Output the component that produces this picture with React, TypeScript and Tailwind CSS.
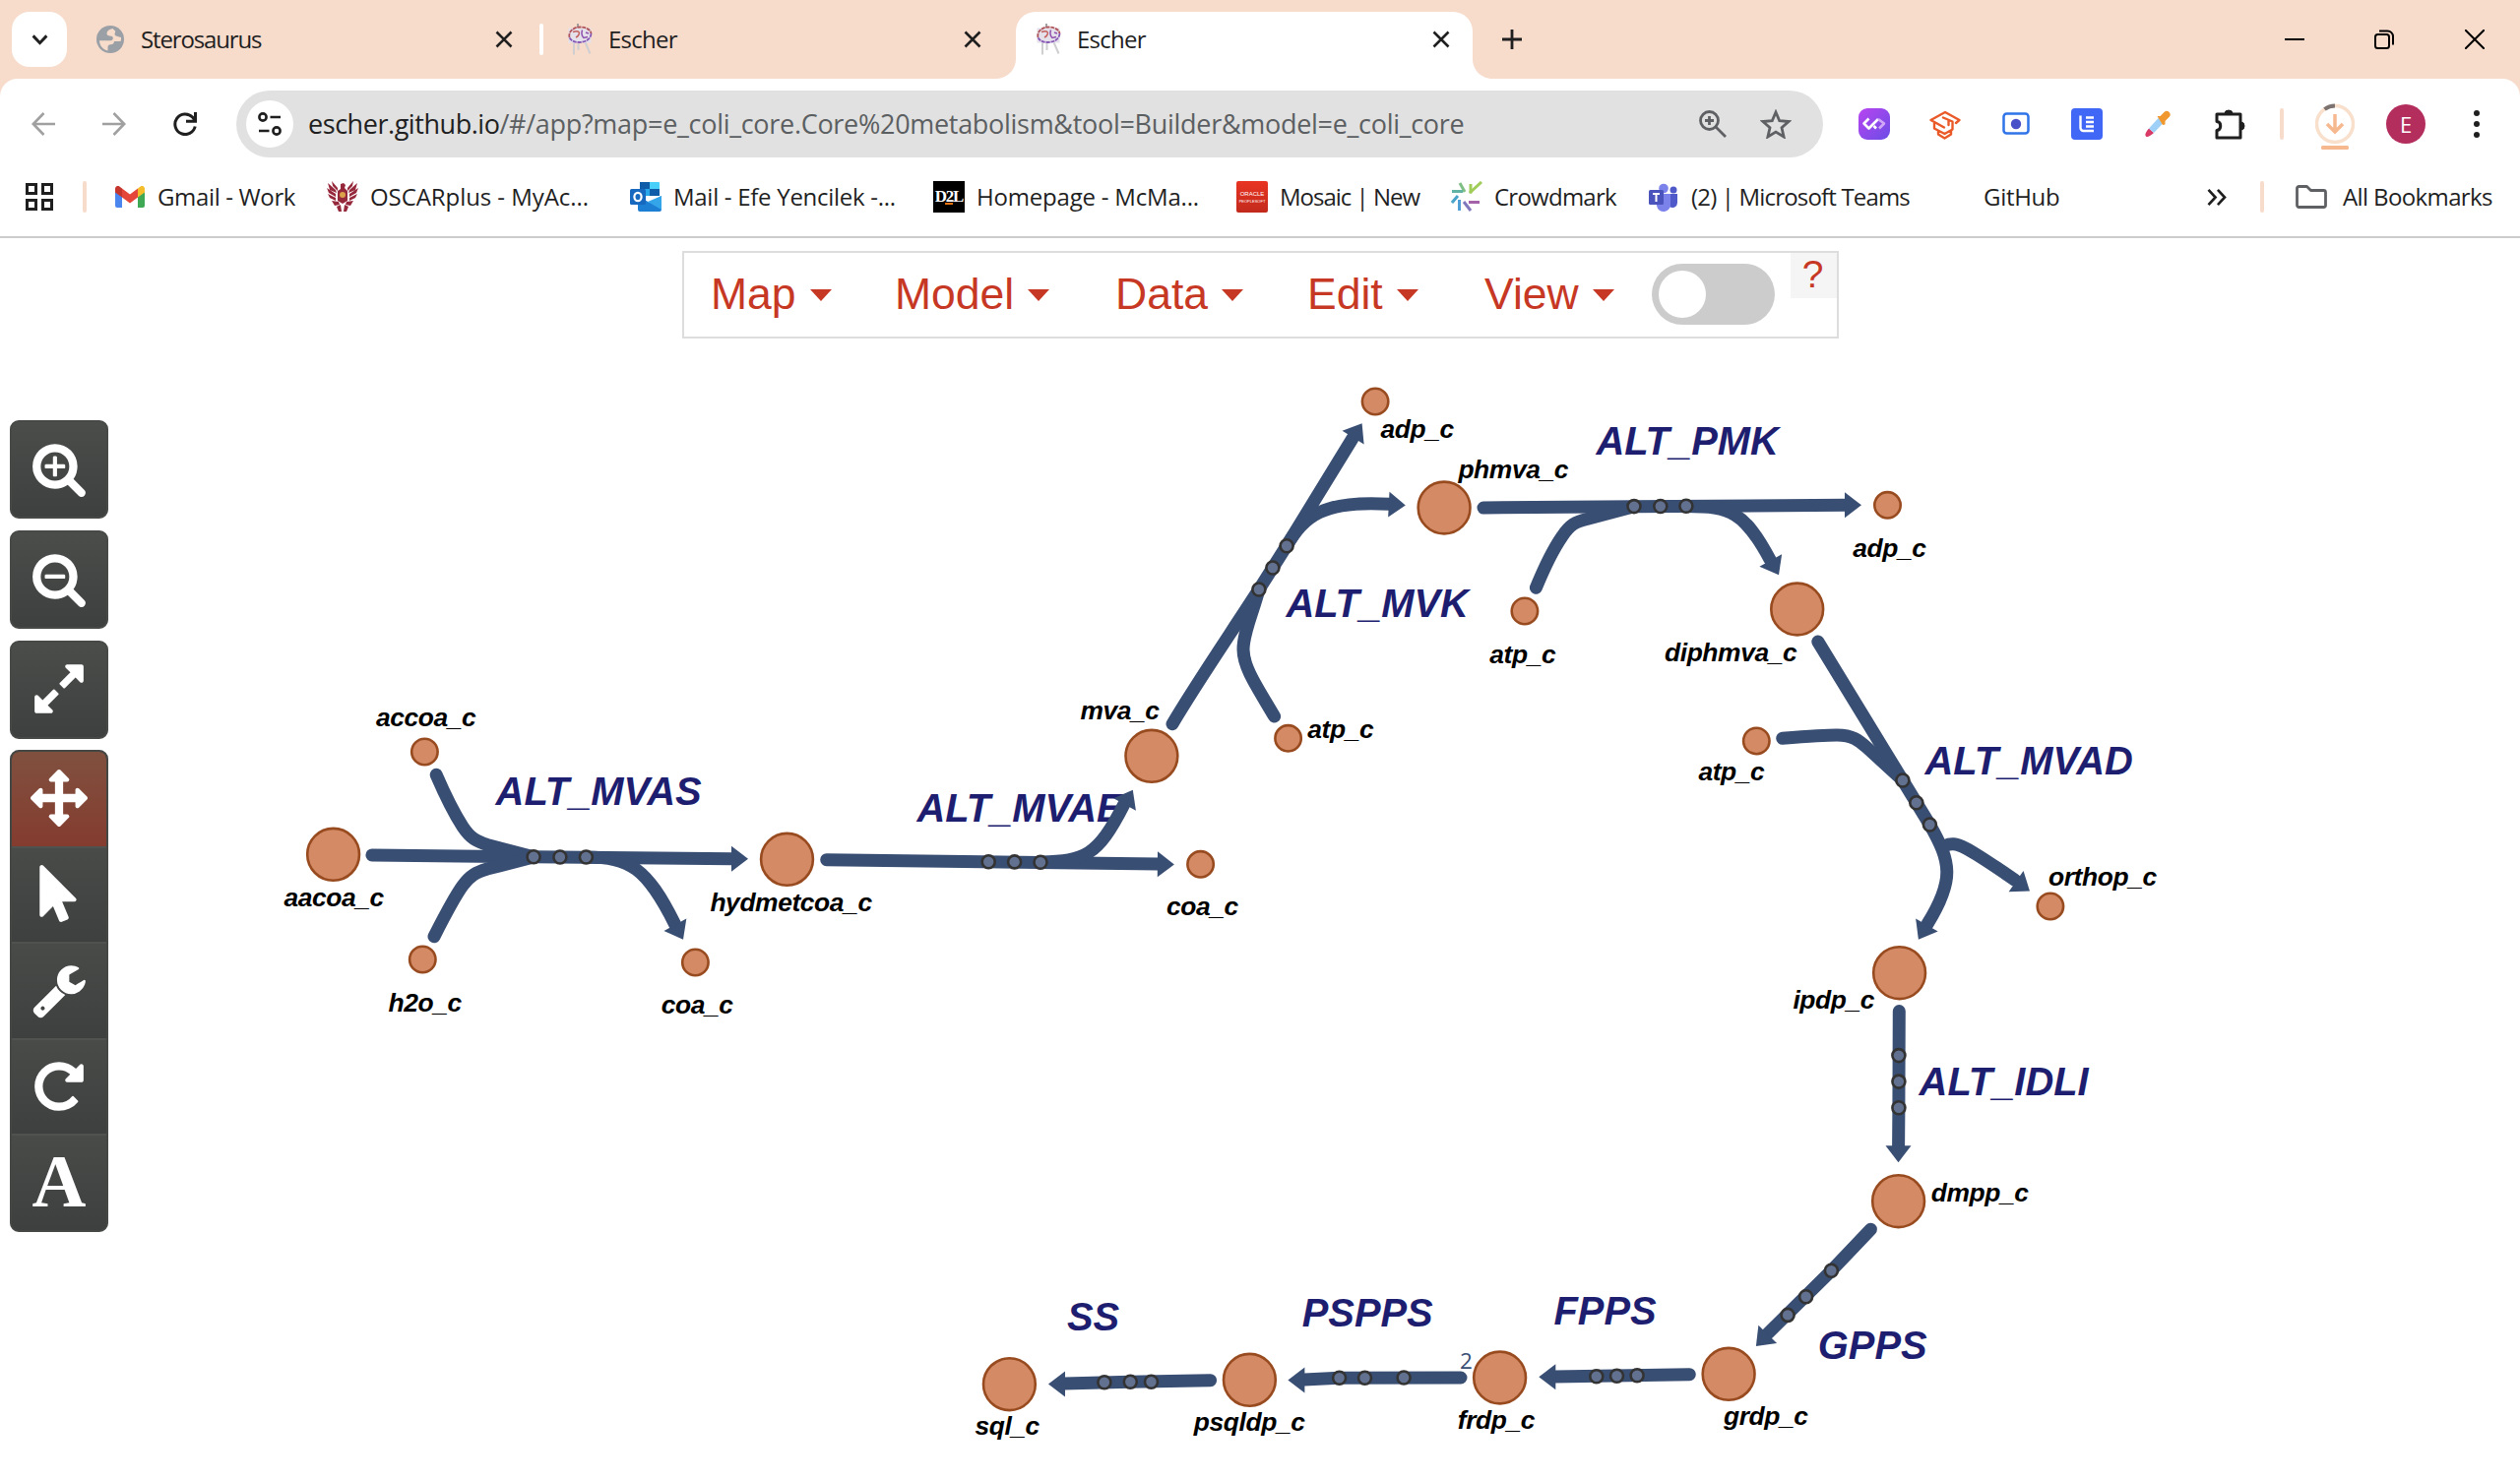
import React from "react";

const INK = "#394e73";

/* ---------- pathway data ---------- */

const bigNodes: [number, number][] = [
  [338.6, 868.3], [799.5, 873.3], [1169.9, 768.3], [1467.1, 516], [1825.7, 619],
  [1929.6, 988.7], [1928.6, 1220.7], [1756.1, 1396.3], [1523.6, 1400], [1269.4, 1402.3], [1025.4, 1406.7],
];

const smallNodes: [number, number][] = [
  [431.4, 764], [429.3, 975], [706.4, 978], [1219.6, 878.3], [1397.1, 408],
  [1548.9, 621], [1308.6, 750.3], [1917.5, 513.3], [1784.3, 753], [2082.9, 921],
];

const markers: [number, number][] = [
  [542.1, 870.8], [568.9, 871], [595.4, 871],
  [1004.2, 875.8], [1030.6, 875.9], [1057, 876.2],
  [1278.9, 599], [1292.9, 577], [1307.1, 554.7],
  [1660, 514.6], [1686.8, 514.5], [1712.9, 514.3],
  [1932.9, 793], [1946.8, 815.7], [1960.4, 838],
  [1928.9, 1072.6], [1928.9, 1099.1], [1928.9, 1125.7],
  [1860.4, 1291.3], [1834.6, 1317.8], [1816.1, 1336.4],
  [1621.8, 1398.7], [1642.5, 1398.3], [1663.1, 1397.7],
  [1360.6, 1400.3], [1386.5, 1400.3], [1426.1, 1400],
  [1121.9, 1404.7], [1148.3, 1404.3], [1169.5, 1404.3],
];

const edges: string[] = [
  "M377.9 869 L542 870.8 L744 872.7",
  "M443.2 787.3 C453 810 463 829 470 840 C478 852 484 855 495 858.5 L542 870.8",
  "M441 951.7 C451 932 462 911 470 900 C478 889 484 886.5 495 883 L542 871",
  "M595 871 C640 871 657 882 685.5 939",
  "M839.7 873.7 L1177 878",
  "M1057 876 C1102 875 1115 870 1141.5 818",
  "M1191 735.7 C1215 695 1250 644 1279 599 L1307 554.7 L1374 445.5",
  "M1307 554.7 C1325 525 1343 508 1411.5 512.3",
  "M1294.6 728 C1277 698 1263 678 1263 660 C1263 643 1272 625 1279 599",
  "M1507 516 L1660 514.7 L1875 513.3",
  "M1560.4 597.3 C1570 574 1580 555 1587 545 C1595 533 1601 530 1612 527.5 L1660 514.7",
  "M1713 514.5 C1758 514.5 1772 520 1798 568.5",
  "M1846.8 652 L1932.9 793 L1960.4 838",
  "M1810.7 750.3 C1840 748 1855 747 1866 747 C1882 747 1888 752 1898 761 L1932.9 793",
  "M1960.4 838 C1982 876 1986 894 1958 939",
  "M1976 859.5 C1987 854 1997 860 2047 894.3",
  "M1929.3 1027.5 L1928.9 1126 L1928.6 1165",
  "M1900.4 1249.3 L1860.4 1291.3 L1796 1355",
  "M1716.3 1396.7 L1579 1399",
  "M1484 1400 L1360 1400.3 L1325 1402",
  "M1229.6 1402.7 L1148 1404.3 L1081 1406",
];

/* arrow heads: tip x, tip y, heading in degrees */
const heads: [number, number, number][] = [
  [760, 872.8, 0], [694, 954.7, 61.5], [1192.9, 878.4, 0.5], [1150.8, 802.7, -61],
  [1383.6, 430.3, -58], [1427.8, 513.5, 3], [1891, 513.3, 0], [1807, 584.3, 61],
  [1948.9, 954.7, 120], [2062, 905.4, 35], [1928.5, 1181.2, 90], [1783.9, 1368.1, 134],
  [1563.3, 1399.3, 180], [1308.4, 1402.4, 180], [1065, 1406.4, 180],
];

const reactions: [string, number, number][] = [
  ["ALT_MVAS", 503.6, 817.7], ["ALT_MVAE", 931.5, 835], ["ALT_MVK", 1306.4, 627],
  ["ALT_PMK", 1621.4, 461.7], ["ALT_MVAD", 1955.5, 787], ["ALT_IDLI", 1949.6, 1113],
  ["GPPS", 1846.8, 1381.3], ["FPPS", 1578.5, 1345.7], ["PSPPS", 1322.7, 1347.7], ["SS", 1084, 1351.5],
];

const metabolites: [string, number, number][] = [
  ["accoa_c", 382, 737.7], ["aacoa_c", 288.4, 920.7], ["h2o_c", 394.6, 1028], ["coa_c", 671.8, 1030.3],
  ["hydmetcoa_c", 721.4, 925.7], ["mva_c", 1097.4, 731], ["coa_c", 1185, 930.3], ["adp_c", 1402.5, 444.7],
  ["phmva_c", 1481.4, 486], ["atp_c", 1513.3, 673.7], ["atp_c", 1328.3, 749.7], ["adp_c", 1882.3, 565.7],
  ["diphmva_c", 1691, 671.7], ["atp_c", 1725.4, 792.7], ["orthop_c", 2081, 899.7], ["ipdp_c", 1821.4, 1024.7],
  ["dmpp_c", 1961.8, 1220.7], ["grdp_c", 1751, 1447.7], ["frdp_c", 1480.8, 1452], ["psqldp_c", 1212.8, 1454.3],
  ["sql_c", 990.4, 1458.3],
];

/* The canvas begins 242px below the top of the window. */
function Pathway() {
  return (
    <svg viewBox="0 242 2560 1262" className="absolute inset-0 h-[1262px] w-[2560px]">
      <g fontFamily='"Liberation Sans", Arial, sans-serif' fontWeight="bold" fontStyle="italic">
        {reactions.map(([t, x, y]) => (
          <text key={t} x={x} y={y} fontSize="39.9" fill="#1e1e70">{t}</text>
        ))}
      </g>
      <g fill="none" stroke={INK} strokeWidth="13" strokeLinecap="round" strokeLinejoin="round">
        {edges.map((d) => <path key={d} d={d} />)}
      </g>
      <g fill={INK}>
        {heads.map(([x, y, a], i) => (
          <path key={i} d="M0 0 L-17 -13 V13 Z" transform={`translate(${x} ${y}) rotate(${a})`} />
        ))}
      </g>
      <g fill="#62718f" stroke="#333" strokeWidth="2.6">
        {markers.map(([x, y], i) => <circle key={i} cx={x} cy={y} r="6.5" />)}
      </g>
      <g fill="#d38a65" stroke="#994b20" strokeWidth="2.6">
        {bigNodes.map(([x, y], i) => <circle key={i} cx={x} cy={y} r="26.4" />)}
        {smallNodes.map(([x, y], i) => <circle key={i} cx={x} cy={y} r="13.2" />)}
      </g>
      <g fontFamily='"Liberation Sans", Arial, sans-serif' fontWeight="bold" fontStyle="italic" fill="#000">
        {metabolites.map(([t, x, y], i) => (
          <text key={i} x={x} y={y} fontSize="26.4" letterSpacing="-0.4">{t}</text>
        ))}
      </g>
      <text x="1483" y="1390.5" fontSize="22.5" fill={INK} fontFamily='"Open Sans", sans-serif'>2</text>
    </svg>
  );
}

/* ---------- glyphs ---------- */

const glyph = {
  plus: "M1088 800v64q0 13-9.500 22.500t-22.500 9.500h-224v224q0 13-9.500 22.500t-22.500 9.500h-64q-13 0-22.500-9.500t-9.500-22.500v-224h-224q-13 0-22.500-9.500t-9.500-22.500v-64q0-13 9.500-22.500t22.500-9.500h224v-224q0-13 9.500-22.500t22.500-9.500h64q13 0 22.500 9.500t9.500 22.500v224h224q13 0 22.500 9.500t9.500 22.500z",
  minus: "M1088 800v64q0 13-9.500 22.500t-22.500 9.500h-576q-13 0-22.500-9.500t-9.500-22.500v-64q0-13 9.500-22.500t22.500-9.500h576q13 0 22.500 9.500t9.500 22.500z",
  lens: "M1216 832q0-185-131.500-316.500t-316.500-131.500-316.500 131.500-131.500 316.500 131.500 316.500 316.500 131.500 316.500-131.500 131.500-316.500zm512 832q0 53-37.500 90.500t-90.500 37.500q-54 0-90-38l-343-342q-179 124-399 124-143 0-273.500-55.500t-225-150-150-225-55.500-273.500 55.500-273.500 150-225 225-150 273.500-55.500 273.500 55.500 225 150 150 225 55.500 273.500q0 220-124 399l343 343q37 37 37 90z",
  expand: "M883 1056q0 13-10 23l-332 332 144 144q19 19 19 45t-19 45-45 19h-448q-26 0-45-19t-19-45v-448q0-26 19-45t45-19 45 19l144 144 332-332q10-10 23-10t23 10l114 114q10 10 10 23zm781-864v448q0 26-19 45t-45 19-45-19l-144-144-332 332q-10 10-23 10t-23-10l-114-114q-10-10-10-23t10-23l332-332-144-144q-19-19-19-45t19-45 45-19h448q26 0 45 19t19 45z",
  move: "M1792 896q0 26-19 45l-256 256q-19 19-45 19t-45-19-19-45v-128h-384v384h128q26 0 45 19t19 45-19 45l-256 256q-19 19-45 19t-45-19l-256-256q-19-19-19-45t19-45 45-19h128v-384h-384v128q0 26-19 45t-45 19-45-19l-256-256q-19-19-19-45t19-45l256-256q19-19 45-19t45 19 19 45v128h384v-384h-128q-26 0-45-19t-19-45 19-45l256-256q19-19 45-19t45 19l256 256q19 19 19 45t-19 45-45 19h-128v384h384v-128q0-26 19-45t45-19 45 19l256 256q19 19 19 45z",
  pointer: "M1389 1043q31 30 14 69-17 40-59 40h-382l201 476q10 25 0 49t-34 35l-177 75q-25 10-49 0t-35-34l-191-452-312 312q-19 19-45 19-12 0-24-5-40-17-40-59v-1504q0-42 40-59 12-5 24-5 27 0 45 19z",
  wrench: "M448 1472q0-26-19-45t-45-19-45 19-19 45 19 45 45 19 45-19 19-45zm644-420l-682 682q-37 37-90 37-52 0-91-37l-106-108q-38-36-38-90 0-53 38-91l681-681q39 98 114.500 173.500t173.500 114.500zm634-435q0 39-23 106-47 134-164.500 217.500t-258.500 83.500q-185 0-316.500-131.500t-131.500-316.500 131.500-316.500 316.500-131.500q58 0 121.500 16.500t107.500 46.500q16 11 16 28t-16 28l-293 169v224l193 107q5-3 79-48.500t135.500-81 70.500-35.500q15 0 23.500 10t8.500 25z",
  rotate: "M1664 256v448q0 26-19 45t-45 19h-448q-42 0-59-40-17-39 14-69l138-138q-148-137-349-137-104 0-198.500 40.500t-163.500 109.500-109.500 163.500-40.500 198.500 40.500 198.500 109.500 163.500 163.500 109.500 198.500 40.500q119 0 225-52t179-147q7-10 23-12 15 0 25 9l137 138q9 8 9.500 20.500t-7.500 22.500q-109 132-264 204.500t-327 72.500q-156 0-298-61t-245-164-164-245-61-298 61-298 164-245 245-164 298-61q147 0 284.500 55.500t244.500 156.500l130-129q29-31 70-14 39 17 39 59z",
};

function Glyph({ d, className = "" }: { d: string; className?: string }) {
  return (
    <svg viewBox="0 0 1792 1792" className={`size-[58px] ${className}`} fill="#fff">
      <path d={d} fillRule="evenodd" />
    </svg>
  );
}

function ToolButton({ children }: { children: React.ReactNode }) {
  return (
    <div className="flex h-[100px] w-[100px] items-center justify-center rounded-[9px] border-2 border-[#474947] bg-linear-to-b from-[#4b4d4b] to-[#3e403f]">
      {children}
    </div>
  );
}

function GroupCell({ active = false, children }: { active?: boolean; children: React.ReactNode }) {
  return (
    <div
      className={
        active
          ? "flex flex-1 items-center justify-center rounded-t-[7px] bg-linear-to-b from-[#80503f] to-[#843c2f]"
          : "flex flex-1 items-center justify-center border-t-2 border-[#505250] bg-linear-to-b from-[#494b49] to-[#3e403f]"
      }
    >
      {children}
    </div>
  );
}

function Sidebar() {
  return (
    <div className="absolute left-[10px] top-[185px] flex w-[100px] flex-col">
      <div className="flex flex-col gap-3">
        <ToolButton><Glyph d={glyph.lens + glyph.plus} className="-mt-[3px]" /></ToolButton>
        <ToolButton><Glyph d={glyph.lens + glyph.minus} className="-mt-[3px]" /></ToolButton>
        <ToolButton><Glyph d={glyph.expand} className="-mt-[2px]" /></ToolButton>
      </div>
      <div className="mt-[11px] flex h-[490px] flex-col overflow-hidden rounded-[9px] border-2 border-[#454745] bg-[#3e403f]">
        <GroupCell active><Glyph d={glyph.move} className="-mt-[2px]" /></GroupCell>
        <GroupCell><Glyph d={glyph.pointer} className="ml-[2px] -mt-[2px]" /></GroupCell>
        <GroupCell><Glyph d={glyph.wrench} className="-mt-[2px]" /></GroupCell>
        <GroupCell><Glyph d={glyph.rotate} className="-mt-[2px]" /></GroupCell>
        <GroupCell>
          <span className="-mt-[4px] font-['Liberation_Serif',serif] text-[76px] font-bold leading-[76px] text-white">A</span>
        </GroupCell>
      </div>
    </div>
  );
}

/* ---------- app menu ---------- */

function MenuItem({ label, className }: { label: string; className: string }) {
  return (
    <div className={`flex items-center ${className}`}>
      <span className="whitespace-nowrap text-[44.500px] leading-[50px]">{label}</span>
      <svg viewBox="0 0 22 12" className="ml-[14px] mt-[2px] h-[12px] w-[22px]" fill="#c73824">
        <path d="M0 0H22L11 12Z" />
      </svg>
    </div>
  );
}

function AppMenu() {
  return (
    <div className="absolute left-[693px] top-[13px] flex h-[89px] w-[1175px] border-2 border-[#ddd] bg-white pl-[27px] font-['Liberation_Sans',Arial,sans-serif] text-[#c73824]">
      <div className="flex items-center pb-[1px]">
        <MenuItem label="Map" className="w-[187px]" />
        <MenuItem label="Model" className="w-[224px]" />
        <MenuItem label="Data" className="w-[195px]" />
        <MenuItem label="Edit" className="w-[180px]" />
        <MenuItem label="View" className="w-[170px]" />
        <div className="flex h-[62px] w-[125px] items-center rounded-full bg-[#ccc] pl-[7px]">
          <div className="size-[48px] rounded-full bg-white" />
        </div>
      </div>
      <div className="ml-auto flex h-[46px] w-[47px] items-center justify-center bg-[#f5f5f5] pb-[4px] pr-[2px] text-[39px] leading-none">?</div>
    </div>
  );
}

/* ---------- browser chrome ---------- */

function Globe() {
  return (
    <svg viewBox="0 0 28 28" className="size-7 flex-none">
      <circle cx="14" cy="14" r="14" fill="#9aa0a6" />
      <path d="M16.500 3c-3.500.8-6 2.500-6 5 0 1.500 1.200 2.500 3 2.500 2.200 0 3.300.8 3.300 2.400 0 1.500-1.300 2.300-3.800 2.300H3c.3 5.500 3.800 9.300 8.500 10.300v-3.200c0-2 1-3 2.700-3 2.400 0 3.800-1.300 3.800-3.300h6.600c.4-1.300.6-2.500.4-4l-3.500-1c-2.300-.4-3.300-1.400-2.800-3.200l.6-2z" fill="#f7dbcb" />
    </svg>
  );
}

function EscherIcon() {
  return (
    <svg viewBox="0 0 26 32" className="h-8 w-[26px] flex-none" fill="none">
      <path d="M7 19v12.500M11.500 19v8M18.500 19l5 11.500" stroke="#cfcfd2" strokeWidth="2" />
      <path d="M11 0v4" stroke="#8b8b8e" strokeWidth="1.600" />
      <rect x="1.500" y="4.500" width="23" height="15" fill="#e4e1ea" />
      <path d="M2.500 14C1 8 7 3.500 13 3.500S24 6 24.500 10" stroke="#b0545c" strokeWidth="1.800" strokeDasharray="4 .8" />
      <path d="M24.500 10c0 5-5 9-12 9-5 0-9-2-10-5" stroke="#8657b5" strokeWidth="1.800" strokeDasharray="4 .8" />
      <path d="M6 8.500c3-1 5-1 6 0s0 4-3 5.500" stroke="#c4605c" strokeWidth="1.500" />
      <path d="M15.500 6.500c-1 3-.500 6 1.500 8l4-1M19 9l3 1" stroke="#8f4fae" strokeWidth="1.500" />
    </svg>
  );
}

function CloseX() {
  return (
    <svg viewBox="0 0 18 18" className="size-[18px] flex-none" stroke="#1f1f1f" strokeWidth="2.600">
      <path d="M1.500 1.500l15 15M16.500 1.500l-15 15" />
    </svg>
  );
}

function TabStrip() {
  return (
    <div className="flex h-20 items-center bg-[#f7dbcb] pl-3">
      <div className="flex size-14 items-center justify-center rounded-[18px] bg-white">
        <svg viewBox="0 0 18 12" className="h-[11px] w-[17px]" fill="none" stroke="#1f1f1f" strokeWidth="3.200"><path d="M1.500 1.500L9 9.500l7.500-8" /></svg>
      </div>
      <div className="flex h-20 w-[480px] items-center pl-[30px] pr-[27px]">
        <Globe />
        <span className="ml-[17px] flex-1 text-[24px] tracking-[-1.150px]">Sterosaurus</span>
        <CloseX />
      </div>
      <div className="h-8 w-1 rounded-full bg-white" />
      <div className="flex h-20 w-[480px] items-center pl-6 pr-[35px]">
        <EscherIcon />
        <span className="ml-4 flex-1 text-[24px] tracking-[-0.750px]">Escher</span>
        <CloseX />
      </div>
      <div className="relative flex h-20 w-[464px] pt-3">
        <svg viewBox="0 0 20 20" className="absolute -left-5 bottom-0 size-5" fill="#fff"><path d="M20 0v20H0C11 20 20 11 20 0Z" /></svg>
        <svg viewBox="0 0 20 20" className="absolute -right-5 bottom-0 size-5" fill="#fff"><path d="M0 0v20h20C9 20 0 11 0 0Z" /></svg>
        <div className="flex h-[68px] w-full items-center rounded-t-[20px] bg-white pb-3 pl-5 pr-[23px]">
          <EscherIcon />
          <span className="ml-4 flex-1 text-[24px] tracking-[-0.750px]">Escher</span>
          <CloseX />
        </div>
      </div>
      <svg viewBox="0 0 20 20" className="ml-[30px] size-5" stroke="#1f1f1f" strokeWidth="2.800"><path d="M10 0v20M0 10h20" /></svg>
      <div className="ml-auto flex items-center pr-9">
        <svg viewBox="0 0 20 20" className="size-5" stroke="#000" strokeWidth="2"><path d="M0 10h20" /></svg>
        <svg viewBox="0 0 20 20" className="ml-[71px] size-5" stroke="#000" strokeWidth="2" fill="none"><rect x="1" y="5" width="14" height="14" rx="2.500" /><path d="M5 1.500h8.500A5.500 5.500 0 0 1 19 7v8.500" /></svg>
        <svg viewBox="0 0 20 20" className="ml-[72px] size-5" stroke="#000" strokeWidth="2"><path d="M0 0l20 20M20 0L0 20" /></svg>
      </div>
    </div>
  );
}

function Toolbar() {
  return (
    <div className="flex h-[92px] items-center bg-[#f7dbcb]">
      <div className="flex h-full w-full items-center rounded-t-[18px] bg-white pl-8">
        <svg viewBox="0 0 24 24" className="size-6" fill="none" stroke="#a0a0a0" strokeWidth="2.600"><path d="M12.500 1L1.800 12l10.700 11M2 12h22" /></svg>
        <svg viewBox="0 0 24 24" className="ml-12 size-6" fill="none" stroke="#a0a0a0" strokeWidth="2.600"><path d="M11.500 1l10.700 11-10.700 11M22 12H0" /></svg>
        <svg viewBox="0 0 24 24" className="ml-12 size-6" fill="none" stroke="#1f1f1f" strokeWidth="3"><path d="M22.200 14.500A10.300 10.300 0 1 1 19.500 5L22 8M22.500 0v9.300H13" /></svg>
        <div className="ml-10 flex h-[68px] w-[1612px] items-center rounded-full bg-[#e1e1e1] pl-[10px] pr-8">
          <div className="flex size-12 items-center justify-center rounded-full bg-white">
            <svg viewBox="0 0 24 24" className="size-6" fill="none" stroke="#1f1f1f" strokeWidth="2.600"><circle cx="5" cy="5" r="3.600" /><circle cx="19" cy="19" r="3.600" /><path d="M12.500 5H23M1 19h10.500" /></svg>
          </div>
          <span className="ml-[15px] whitespace-nowrap text-[27px] tracking-[-0.295px] text-[#5c5f62]">
            <span className="tracking-[-0.450px] text-[#1f1f1f]">escher.github.io</span>/#/app?map=e_coli_core.Core%20metabolism&amp;tool=Builder&amp;model=e_coli_core
          </span>
          <svg viewBox="0 0 28 28" className="ml-auto size-7" fill="none" stroke="#5f6063" strokeWidth="2.800"><circle cx="10.500" cy="10.500" r="9" /><path d="M17 17l10 10M10.500 6v9M6 10.500h9" /></svg>
          <svg viewBox="0 0 32 30" className="ml-[34px] h-[30px] w-8" fill="none" stroke="#5f6063" strokeWidth="2.800"><path d="M16 3l3.700 8.700 9.300.8-7 6.200 2.100 9.300-8.100-4.900L7.900 28 10 18.700l-7-6.200 9.300-.8z" /></svg>
        </div>
        <svg viewBox="0 0 32 32" className="ml-9 size-8">
          <defs><linearGradient id="pg" x1="0" y1="0" x2="1" y2="1"><stop offset="0" stopColor="#b845f0" /><stop offset="1" stopColor="#6b4de6" /></linearGradient></defs>
          <rect width="32" height="32" rx="9" fill="url(#pg)" />
          <path d="M10.500 10.500L5.500 15.500l5 5 9.500-9.500" fill="none" stroke="#fff" strokeWidth="2.600" strokeLinejoin="round" />
          <path d="M15.500 18l2.500 2.500" fill="none" stroke="#fff" strokeWidth="2.600" />
          <path d="M20 11l6 4.500-5 5" fill="none" stroke="#d0a8f7" strokeWidth="2.600" strokeLinejoin="round" />
        </svg>
        <svg viewBox="0 0 32 32" className="ml-10 size-8" fill="none" stroke="#ea5a28" strokeWidth="2.400" strokeLinejoin="round" strokeLinecap="round">
          <path d="M15 19.500L1.500 12 16 4l14.500 8-3.500 3M5 15v5.500l10.500 5.500 8-4.500V13.500L14 9.500M9 23.500v3l6.500 4 6.500-4v-3.500M19.500 12v5" />
        </svg>
        <svg viewBox="0 0 28 24" className="ml-[42px] h-6 w-7"><rect x="1.500" y="1.500" width="25" height="20" rx="3" fill="#fff" stroke="#2f74e8" strokeWidth="2.500" /><circle cx="14" cy="12" r="5.200" fill="#4951c9" /></svg>
        <svg viewBox="0 0 32 32" className="ml-[42px] size-8"><rect width="32" height="32" rx="4" fill="#4067f5" /><path d="M9.500 7.500V20a3 3 0 0 0 3 3H23M15 9.500h8M15 14h8M15 18.500h8" stroke="#fff" strokeWidth="2.400" fill="none" /></svg>
        <svg viewBox="0 0 28 28" className="ml-[42px] size-7"><path d="M2 26.500c-1.500-1.500 0-4.500 3-8l5 4.500c-3 3-7 5-8 3.500z" fill="#d93a66" /><path d="M5 18.500L15.500 7l5 5L10 23z" fill="#9fd0f7" /><path d="M13.500 6h3L21 1.500c3-2.500 7.500 2 5 5L21.500 11v3.500L19 15z" fill="#f0982e" /></svg>
        <svg viewBox="0 0 34 34" className="ml-[43px] size-[34px]" fill="none" stroke="#1f1f1f" strokeWidth="3" strokeLinejoin="round">
          <path d="M3 7h24v24H3v-7.500c5-.5 5-8.500 0-9z" />
          <path d="M11 6.500a4 3.500 0 0 1 8 0zM27.500 15a3.500 4 0 0 1 0 8z" fill="#1f1f1f" strokeWidth="1" />
        </svg>
        <div className="ml-[33px] h-8 w-1 rounded-full bg-[#f7dbcb]" />
        <svg viewBox="0 0 40 50" className="ml-8 mt-[6px] h-[50px] w-10" fill="none">
          <circle cx="20" cy="22" r="18.500" stroke="#f9e0cd" strokeWidth="3.500" />
          <path d="M9.500 7A18.500 18.500 0 0 1 20 3.500" stroke="#7c7370" strokeWidth="4" />
          <path d="M20 12v17M12 22l8 8 8-8" stroke="#f6b88f" strokeWidth="3.500" />
          <rect x="6" y="44" width="28" height="4" rx="1.500" fill="#f6b88f" />
        </svg>
        <div className="ml-8 flex size-10 items-center justify-center rounded-full bg-[#b32d5d] text-[22px] text-white">E</div>
        <svg viewBox="0 0 6 28" className="ml-[49px] h-7 w-[6px]" fill="#1f1f1f"><circle cx="3" cy="3" r="3" /><circle cx="3" cy="14" r="3" /><circle cx="3" cy="25" r="3" /></svg>
      </div>
    </div>
  );
}

function Bookmark({ icon, label, box, track }: { icon?: React.ReactNode; label: string; box: string; track: string }) {
  return (
    <div className={`flex flex-none items-center ${box}`}>
      {icon && <div className="mr-3 flex size-8 flex-none items-center justify-center">{icon}</div>}
      <span className={`whitespace-nowrap text-[24px] ${track}`}>{label}</span>
    </div>
  );
}

const GmailIcon = (
  <svg viewBox="0 0 30 22" className="h-[22px] w-[30px]">
    <path d="M0 3v17a2 2 0 0 0 2 2h5V8.500z" fill="#4a86ee" />
    <path d="M30 3v17a2 2 0 0 1-2 2h-5V8.500z" fill="#3fa855" />
    <path d="M23 2.500L26 .3c2-1 4 .4 4 2.700v3.500l-7 5z" fill="#f6bd2b" />
    <path d="M7 2.500L4 .3C2 -.7 0 .7 0 3v3.500l7 5z" fill="#c5352b" />
    <path d="M7 2.500l8 6 8-6v9l-8 6-8-6z" fill="#e4473a" />
  </svg>
);

const CrestIcon = (
  <svg viewBox="0 0 32 32" className="size-8" fill="#96283c">
    <path d="M1 2l8 7 1 3-7-3zM0 7l9 6v3l-7-4zM1 13l8 4v3l-6-3zM31 2l-8 7-1 3 7-3zM32 7l-9 6v3l7-4zM31 13l-8 4v3l6-3zM14 3l3-1 2 2-1 3 3 3v10l-5 3-5-3V10l3-2zM5 20l7 1 1 3-5 1zM27 20l-7 1-1 3 5 1zM10 26l4-2 1 7h-3zM22 26l-4-2-1 7h3zM5 0l6 7v3L6 5zM27 0l-6 7v3l5-5z" />
    <circle cx="16" cy="14" r="3" fill="#dba04a" />
  </svg>
);

const OutlookIcon = (
  <svg viewBox="0 0 32 30" className="h-[30px] w-8">
    <path d="M10 1.500A1.500 1.500 0 0 1 11.500 0h17A1.500 1.500 0 0 1 30 1.500V14H10z" fill="#28a8ea" />
    <path d="M10 0h10v7H10zM20 14h10V7H20z" fill="#0f5ca8" />
    <path d="M20 0h10v7H20z" fill="#50d9ff" opacity=".8" />
    <path d="M8 14l12 7 12-7v14a2 2 0 0 1-2 2H10a2 2 0 0 1-2-2z" fill="#1d7fd4" />
    <path d="M32 14v14L18 20z" fill="#35a5ea" />
    <rect y="7" width="16" height="16" rx="1.500" fill="#1768bf" />
    <ellipse cx="8" cy="15" rx="3.600" ry="4.200" fill="none" stroke="#fff" strokeWidth="2.200" />
  </svg>
);

const D2LIcon = (
  <div className="relative flex size-8 items-center justify-center overflow-hidden bg-black">
    <span className="font-['Liberation_Serif',serif] text-[17px] font-bold tracking-[-1.200px] text-white">D2L</span>
    <div className="absolute bottom-[8px] left-[12px] h-[2px] w-2 bg-[#e87511]" />
  </div>
);

const OracleIcon = (
  <div className="flex size-8 flex-col items-center justify-center gap-[2px] rounded-[2px] bg-linear-to-b from-[#e93423] to-[#c22a1c] font-['Liberation_Sans',sans-serif] text-white">
    <span className="text-[6px] leading-[6px]">ORACLE</span>
    <span className="text-[4px] leading-[5px]">PEOPLESOFT</span>
  </div>
);

const CrowdmarkIcon = (
  <svg viewBox="0 0 32 32" className="size-8" strokeWidth="3" fill="none">
    <path d="M19 12L31 1" stroke="#a0cc58" /><path d="M20 3v9.500" stroke="#a0cc58" />
    <path d="M9 2l5 9" stroke="#7fbf86" /><path d="M1 10.500h11" stroke="#63b3a4" />
    <path d="M1 22l6-7" stroke="#4aa3c9" /><path d="M8.500 19v11" stroke="#4f9fd6" />
    <path d="M13 21l7 9" stroke="#8078bd" /><path d="M18 21.500h11" stroke="#a462a8" />
  </svg>
);

const TeamsIcon = (
  <svg viewBox="0 0 32 32" className="size-8">
    <circle cx="16" cy="7.500" r="4.800" fill="#7b83eb" /><circle cx="26" cy="9" r="3.500" fill="#5059c9" />
    <path d="M22 13h8v9a5 5 0 0 1-8 4z" fill="#5059c9" />
    <path d="M9 13h14v10a7 7 0 0 1-14 2z" fill="#7b83eb" />
    <rect x="1" y="9" width="15" height="15" rx="1.500" fill="#4b53bc" />
    <path d="M5 13h7M8.500 13v8" stroke="#fff" strokeWidth="2" />
  </svg>
);

function Bookmarks() {
  return (
    <div className="flex h-[70px] items-center border-b-2 border-[#ccc] bg-white pb-3 pl-[26px]">
      <svg viewBox="0 0 28 28" className="size-7 flex-none" fill="none" stroke="#1f1f1f" strokeWidth="3"><path d="M1.500 1.500h9v9h-9zM17.500 1.500h9v9h-9zM1.500 17.500h9v9h-9zM17.500 17.500h9v9h-9z" /></svg>
      <div className="ml-[30px] h-8 w-1 flex-none rounded-full bg-[#f7dbcb]" />
      <div className="ml-7 flex items-center">
        <Bookmark icon={GmailIcon} label="Gmail - Work" box="w-[216px]" track="tracking-[-0.350px]" />
        <Bookmark icon={CrestIcon} label="OSCARplus - MyAc..." box="w-[308px]" track="tracking-[-0.070px]" />
        <Bookmark icon={OutlookIcon} label="Mail - Efe Yencilek -..." box="w-[308px]" track="tracking-[-0.280px]" />
        <Bookmark icon={D2LIcon} label="Homepage - McMa..." box="w-[308px]" track="tracking-[-0.200px]" />
        <Bookmark icon={OracleIcon} label="Mosaic | New" box="w-[218px]" track="tracking-[-1px]" />
        <Bookmark icon={CrowdmarkIcon} label="Crowdmark" box="w-[200px]" track="tracking-[-0.750px]" />
        <Bookmark icon={TeamsIcon} label="(2) | Microsoft Teams" box="w-[341px]" track="tracking-[-0.830px]" />
        <Bookmark label="GitHub" box="w-[227px]" track="tracking-[-0.300px]" />
      </div>
      <svg viewBox="0 0 20 18" className="h-[17px] w-5 flex-none" fill="none" stroke="#1f1f1f" strokeWidth="2.800"><path d="M1 1l7.500 8L1 17M11 1l7.500 8-7.500 8" /></svg>
      <div className="ml-[34px] h-8 w-1 flex-none rounded-full bg-[#f7dbcb]" />
      <svg viewBox="0 0 32 24" className="ml-8 h-6 w-8 flex-none" fill="none" stroke="#5f6063" strokeWidth="2.800" strokeLinejoin="round"><path d="M1.500 3.500a2 2 0 0 1 2-2h8l4 4h13a2 2 0 0 1 2 2v13a2 2 0 0 1-2 2h-25a2 2 0 0 1-2-2z" /></svg>
      <span className="ml-4 whitespace-nowrap text-[24px] tracking-[-0.620px]">All Bookmarks</span>
    </div>
  );
}

export default function App() {
  return (
    <div className="flex h-[1504px] w-[2560px] flex-col overflow-hidden bg-white font-['Open_Sans',sans-serif] text-[#1f1f1f]">
      <TabStrip />
      <Toolbar />
      <Bookmarks />
      <div className="relative h-[1262px] w-full">
        <Pathway />
        <AppMenu />
        <Sidebar />
      </div>
    </div>
  );
}
